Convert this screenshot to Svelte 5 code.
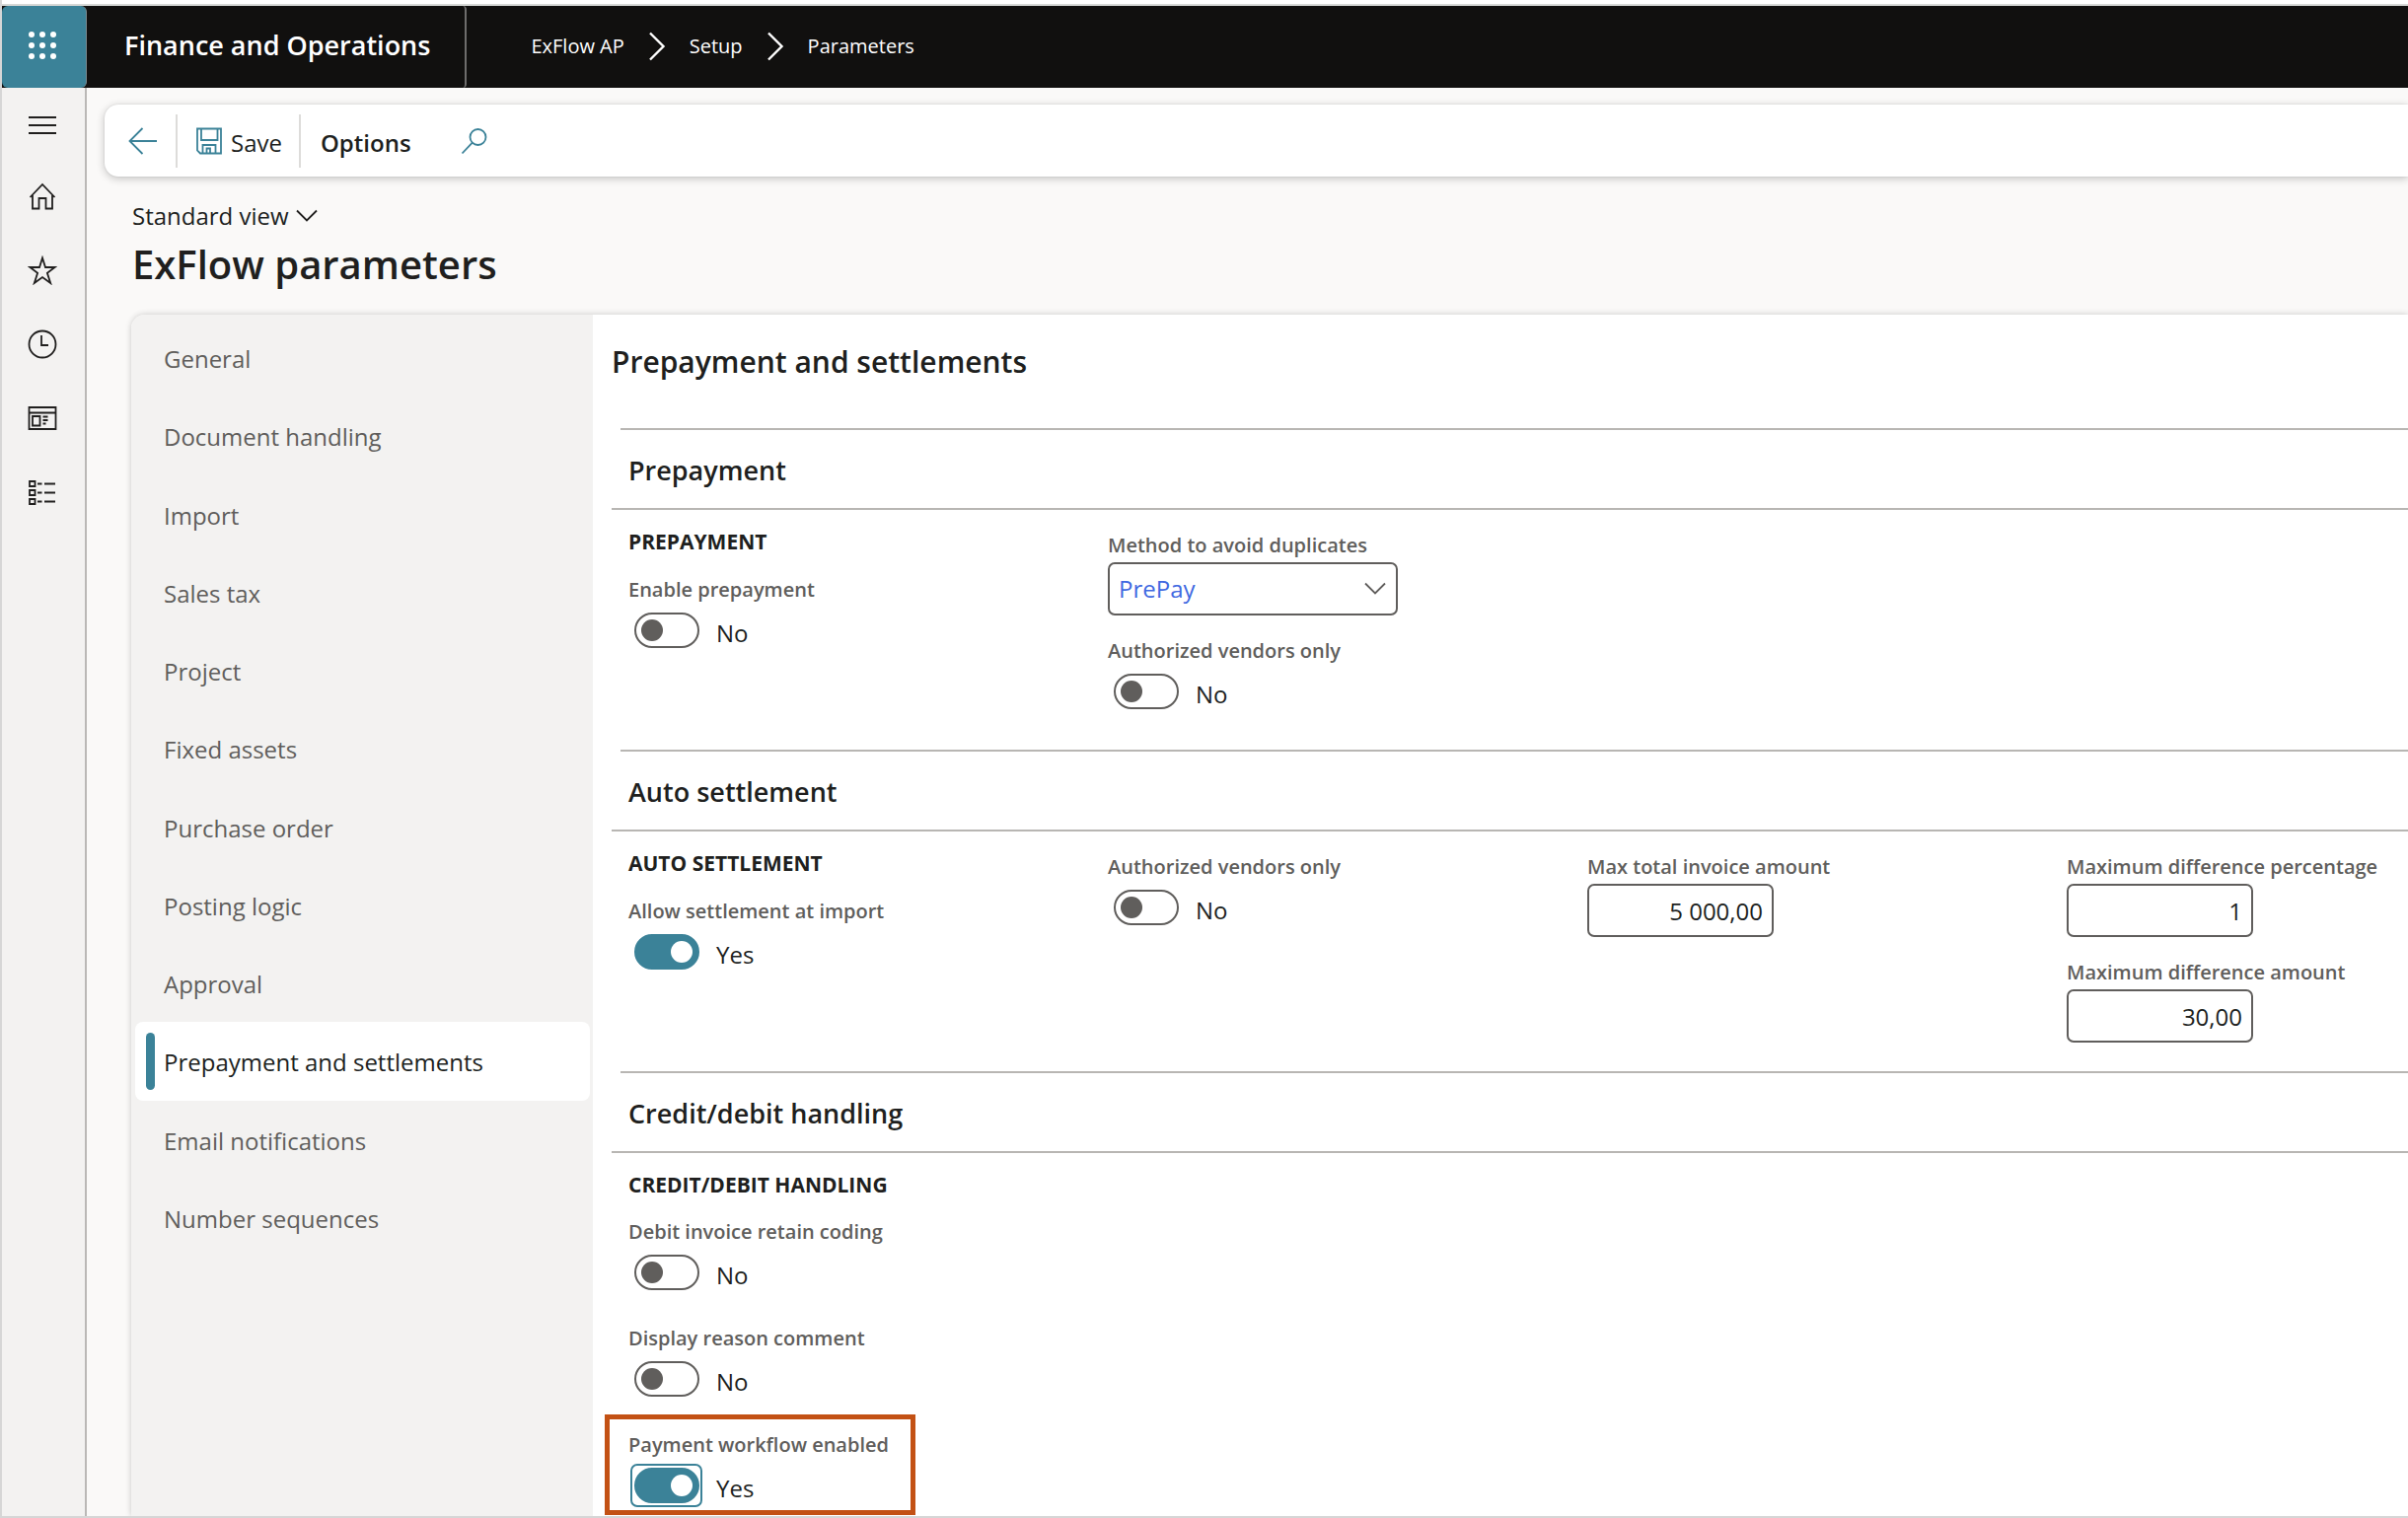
<script>
  let selected = $state('Prepayment and settlements');

  const tabs = [
    'General',
    'Document handling',
    'Import',
    'Sales tax',
    'Project',
    'Fixed assets',
    'Purchase order',
    'Posting logic',
    'Approval',
    'Prepayment and settlements',
    'Email notifications',
    'Number sequences'
  ];

  const crumbs = ['ExFlow AP', 'Setup', 'Parameters'];

  let params = $state({
    enablePrepayment: false,
    prepayAuthorized: false,
    allowSettlement: true,
    settleAuthorized: false,
    retainCoding: false,
    reasonComment: false,
    paymentWorkflow: true,
    method: 'PrePay',
    maxTotal: '5 000,00',
    maxPercent: '1',
    maxAmount: '30,00'
  });
</script>

{#snippet toggle(key, label, focused = false)}
  <div class="field">
    <label class="label" for={key}>{label}</label>
    <div class="toggle-row">
      <span class="ring" class:focused>
        <input class="switch" type="checkbox" role="switch" id={key} bind:checked={params[key]} />
      </span>
      <span class="state">{params[key] ? 'Yes' : 'No'}</span>
    </div>
  </div>
{/snippet}

{#snippet amount(key, label)}
  <div class="field">
    <label class="label" for={key}>{label}</label>
    <input class="amount" type="text" id={key} bind:value={params[key]} />
  </div>
{/snippet}

<div class="app">
  <header class="topbar">
    <button class="launcher" aria-label="App launcher">
      <svg width="28" height="32" viewBox="0 0 28 32" fill="#fff">
        {#each [5, 16, 27] as cy}
          {#each [3, 14, 25] as cx}
            <circle {cx} {cy} r="3" />
          {/each}
        {/each}
      </svg>
    </button>
    <a class="product" href="#home">Finance and Operations</a>
    <nav class="crumbs" aria-label="Breadcrumb">
      {#each crumbs as crumb, i}
        {#if i > 0}
          <svg width="18" height="30" viewBox="0 0 18 30" fill="none" stroke="#fff" stroke-width="2.4">
            <path d="M2 1.500 15.500 15 2 28.500" />
          </svg>
        {/if}
        <a href="#{crumb}">{crumb}</a>
      {/each}
    </nav>
  </header>

  <div class="body">
    <nav class="rail" aria-label="Main">
      <button class="menu" aria-label="Expand the navigation pane">
        <svg width="30" height="30" viewBox="0 0 30 30"><path d="M1 7h28M1 15h28M1 23h28" /></svg>
      </button>
      <button aria-label="Home">
        <svg width="30" height="30" viewBox="0 0 30 30">
          <path d="M2.500 16 15 3l12.500 13M5 14v13.500h6.500V17h7v10.500H25V14" />
        </svg>
      </button>
      <button aria-label="Favorites">
        <svg width="30" height="30" viewBox="0 0 30 30">
          <path d="M15 2.500 18 12h9.500l-7.600 5.800 3.300 10.200L15 22l-8.200 6 3.300-10.200L2.500 12H12z" />
        </svg>
      </button>
      <button aria-label="Recent">
        <svg width="30" height="30" viewBox="0 0 30 30">
          <circle cx="15" cy="15" r="13.500" /><path d="M14 6v10h7" />
        </svg>
      </button>
      <button aria-label="Workspaces">
        <svg width="30" height="30" viewBox="0 0 30 30">
          <path d="M1.500 4h27v22h-27zM1.500 9.500h27M5 13h7.500v9.500H5zM15.500 13.500h5M15.500 17h5M15.500 20.500h3" />
        </svg>
      </button>
      <button aria-label="Modules">
        <svg width="30" height="30" viewBox="0 0 30 30">
          <path d="M2 4h5.500v5H2zM2 13h5.500v5H2zM2 22h5.500v5H2zM10 6.500h4.500M17 6.500h11M10 15.500h4.500M17 15.500h11M10 24.500h4.500M17 24.500h11" />
        </svg>
      </button>
    </nav>

    <main class="page">
      <div class="toolbar">
        <button class="back" aria-label="Back">
          <svg width="30" height="28" viewBox="0 0 30 28"><path d="M29 14H2M14.500 1 1.500 14l13 13" /></svg>
        </button>
        <button class="save">
          <svg width="28" height="28" viewBox="0 0 28 28">
            <path d="M2 1.500h24v25H5L2 23.500zM6 1.500V13h16.500V1.500M7.500 26.500V18h13v8.500M11.500 26.500v-5h3.500v5" />
          </svg>
          <span>Save</span>
        </button>
        <button class="options">Options</button>
        <button class="search" aria-label="Search">
          <svg width="28" height="28" viewBox="0 0 28 28"><circle cx="17.500" cy="10" r="8" /><path d="M11.800 15.700 1.500 26.500" /></svg>
        </button>
      </div>

      <div class="heading">
        <button class="view">
          Standard view
          <svg width="22" height="14" viewBox="0 0 22 14"><path d="m1 1.500 10 10 10-10" /></svg>
        </button>
        <h1>ExFlow parameters</h1>
      </div>

      <div class="panel">
        <ul class="tabs">
          {#each tabs as tab}
            <li>
              <button class:selected={tab === selected} onclick={() => (selected = tab)}>{tab}</button>
            </li>
          {/each}
        </ul>

        <div class="content">
          <h2>Prepayment and settlements</h2>

          <section>
            <h3>Prepayment</h3>
            <div class="columns">
              <div class="column">
                <h4>PREPAYMENT</h4>
                {@render toggle('enablePrepayment', 'Enable prepayment')}
              </div>
              <div class="column">
                <div class="field">
                  <label class="label" for="method">Method to avoid duplicates</label>
                  <div class="select">
                    <select id="method" bind:value={params.method}>
                      <option>PrePay</option>
                    </select>
                    <svg width="22" height="14" viewBox="0 0 22 14"><path d="m1 1.500 10 10 10-10" /></svg>
                  </div>
                </div>
                {@render toggle('prepayAuthorized', 'Authorized vendors only')}
              </div>
            </div>
          </section>

          <section>
            <h3>Auto settlement</h3>
            <div class="columns">
              <div class="column">
                <h4>AUTO SETTLEMENT</h4>
                {@render toggle('allowSettlement', 'Allow settlement at import')}
              </div>
              <div class="column">
                {@render toggle('settleAuthorized', 'Authorized vendors only')}
              </div>
              <div class="column">
                {@render amount('maxTotal', 'Max total invoice amount')}
              </div>
              <div class="column">
                {@render amount('maxPercent', 'Maximum difference percentage')}
                {@render amount('maxAmount', 'Maximum difference amount')}
              </div>
            </div>
          </section>

          <section>
            <h3>Credit/debit handling</h3>
            <div class="columns">
              <div class="column switches">
                <h4>CREDIT/DEBIT HANDLING</h4>
                {@render toggle('retainCoding', 'Debit invoice retain coding')}
                {@render toggle('reasonComment', 'Display reason comment')}
                <div class="callout">
                  {@render toggle('paymentWorkflow', 'Payment workflow enabled', true)}
                </div>
              </div>
            </div>
          </section>
        </div>
      </div>
    </main>
  </div>
</div>

<style>
  :global(body) {
    background: #fff;
    overflow-x: hidden;
  }
  .app {
    --teal: #3b8298;
    --ink: #201f1e;
    --grey: #605e5c;
    --line: #b8b6b3;
    box-sizing: border-box;
    min-height: 100vh;
    display: flex;
    flex-direction: column;
    padding-top: 4px;
    border-left: 2px solid #d6d6d6;
    border-bottom: 2px solid #d6d6d6;
    font-family: "Open Sans", "Segoe UI", sans-serif;
    font-size: 24px;
    line-height: 32px;
    color: var(--ink);
    overflow: hidden;
  }
  .app *, .app *::before { box-sizing: border-box; }
  button, input, select {
    font: inherit;
    color: inherit;
    background: none;
    border: 0;
    margin: 0;
    padding: 0;
  }
  button { cursor: pointer; }
  a { color: inherit; text-decoration: none; }
  h1, h2, h3, h4, ul { margin: 0; padding: 0; }
  h1, h2, h3 { font-weight: 600; }
  svg { display: block; flex: none; }

  .topbar {
    display: flex;
    height: 85px;
    background: #11100f;
    border-top: 2px solid #d6d8d6;
    color: #fff;
  }
  .launcher {
    display: grid;
    place-items: center;
    width: 86px;
    padding: 0 3px 3px 0;
    background: var(--teal);
    border-right: 1px solid #7a8a8f;
    border-radius: 6px;
  }
  .product {
    display: flex;
    align-items: center;
    padding: 0 35px 4px 38px;
    border-right: 2px solid #6e6d6c;
    border-radius: 0 4px 4px 0;
    font-size: 27px;
    font-weight: 600;
  }
  .crumbs {
    display: flex;
    align-items: center;
    gap: 24px;
    padding: 0 0 2px 65px;
    font-size: 20px;
  }

  .body { display: flex; flex: 1; }
  .rail {
    display: flex;
    flex-direction: column;
    flex: none;
    width: 86px;
    background: #f3f2f1;
    border-right: 2px solid #bab8b6;
  }
  .rail button {
    display: grid;
    place-items: center;
    height: 75px;
    padding-right: 2px;
  }
  .rail .menu { height: 72px; padding-top: 4px; }
  .rail svg, .view svg { fill: none; stroke: var(--ink); stroke-width: 1.8; }

  .page {
    flex: 1;
    min-width: 0;
    display: flex;
    flex-direction: column;
    background: #faf9f8;
    padding-top: 17px;
  }
  .toolbar {
    display: flex;
    align-items: center;
    height: 73px;
    margin-left: 18px;
    background: #fff;
    border-radius: 14px 0 0 14px;
    box-shadow: 0 2px 8px rgb(0 0 0 / 0.22), 0 0 2px rgb(0 0 0 / 0.12);
  }
  .toolbar svg { fill: none; stroke: var(--teal); stroke-width: 1.8; }
  .back {
    display: flex;
    align-items: center;
    height: 54px;
    padding: 0 18px 0 24px;
    border-right: 2px solid #dddcda;
  }
  .save {
    display: flex;
    align-items: center;
    gap: 8px;
    height: 54px;
    padding: 0 17px 0 18px;
    border-right: 2px solid #dddcda;
  }
  .save span { padding-top: 4px; }
  .options { padding: 4px 18px 0 20px; font-weight: 600; }
  .search { padding-left: 32px; }

  .heading { padding: 24px 0 0 46px; }
  .view { display: flex; align-items: center; gap: 7px; }
  h1 { font-size: 40px; line-height: 56px; padding: 5px 0 23px; }

  .panel {
    display: flex;
    flex: 1;
    margin-left: 45px;
    background: linear-gradient(to right, #f3f2f1 468px, #fff 468px);
    border-radius: 14px 0 0 0;
    box-shadow: 0 0 6px rgb(0 0 0 / 0.2);
  }
  .tabs {
    flex: none;
    display: grid;
    grid-template-rows: repeat(12, 1fr);
    width: 468px;
    height: 955px;
    padding: 4px 3px 0 4px;
    list-style: none;
  }
  .tabs li { display: flex; }
  .tabs button {
    display: flex;
    align-items: center;
    position: relative;
    width: 100%;
    padding: 3px 0 0 29px;
    border-radius: 8px;
    color: var(--grey);
    text-align: left;
  }
  .tabs .selected { background: #fff; color: var(--ink); }
  .tabs .selected::before {
    content: "";
    position: absolute;
    left: 11px;
    top: 11px;
    bottom: 11px;
    width: 9px;
    border-radius: 5px;
    background: var(--teal);
  }

  .content { flex: 1; min-width: 0; padding: 27px 0 0 19px; }
  h2 { font-size: 30px; line-height: 42px; padding-bottom: 46px; }
  section { min-height: 326px; }
  h3 {
    height: 83px;
    padding: 24px 0 0 17px;
    border-bottom: 2px solid var(--line);
    background: linear-gradient(var(--line), var(--line)) 9px 0 / 100% 2px no-repeat;
    font-size: 27px;
    line-height: 38px;
  }
  .columns {
    display: grid;
    grid-template-columns: repeat(3, 486px) 1fr;
    padding: 19px 0 0 17px;
  }
  .column {
    display: flex;
    flex-direction: column;
    gap: 22px;
    padding-top: 3px;
    white-space: nowrap;
  }
  h4 { margin: -4px 0 -1px; font-size: 21px; line-height: 28px; font-weight: 700; }
  .label {
    display: block;
    margin-bottom: 3px;
    font-size: 20px;
    line-height: 28px;
    font-weight: 600;
    color: var(--grey);
  }
  .select { position: relative; width: 294px; }
  .select svg {
    position: absolute;
    right: 12px;
    top: 20px;
    fill: none;
    stroke: var(--grey);
    stroke-width: 1.8;
    pointer-events: none;
  }
  select, .amount {
    display: block;
    height: 54px;
    border: 2px solid var(--grey);
    border-radius: 7px;
  }
  select {
    appearance: none;
    width: 100%;
    padding-left: 9px;
    color: #4169e1;
  }
  .amount { width: 189px; padding: 0 9px; text-align: right; }

  .toggle-row { display: flex; gap: 14px; height: 47px; }
  .ring {
    display: grid;
    place-items: center;
    width: 73px;
    height: 44px;
    margin: 2px 0 0 2px;
    border: 2px solid transparent;
    border-radius: 7px;
  }
  .ring.focused { border-color: var(--teal); }
  .switch {
    appearance: none;
    width: 66px;
    height: 36px;
    padding: 0 5px;
    display: flex;
    align-items: center;
    border: 2px solid var(--grey);
    border-radius: 18px;
    background: #fff;
  }
  .switch::before {
    content: "";
    width: 22px;
    height: 22px;
    border-radius: 50%;
    background: var(--grey);
  }
  .switch:checked {
    justify-content: flex-end;
    background: var(--teal);
    border-color: var(--teal);
  }
  .switch:checked::before { background: #fff; }
  .state { padding-top: 11px; }

  .switches { gap: 30px; }
  .switches h4 { margin-bottom: -10px; }
  .callout {
    width: 315px;
    margin: -17px 0 0 -24px;
    padding: 12px 0 2px 19px;
    border: 5px solid #c35114;
  }
</style>
